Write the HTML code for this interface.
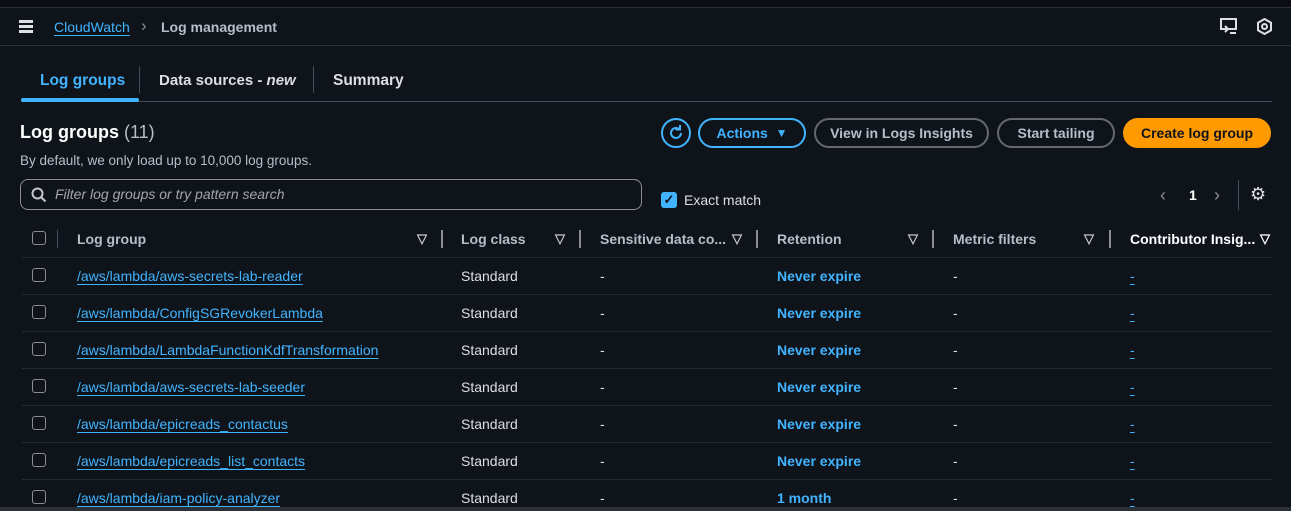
<!DOCTYPE html><html><head><style>
*{margin:0;padding:0;box-sizing:border-box}
body{width:1291px;height:511px;background:#0f141a;font-family:"Liberation Sans",sans-serif;color:#c6c6cd;position:relative;overflow:hidden;font-size:14px}
.a{position:absolute;white-space:nowrap}
.b{font-weight:bold}
.link{color:#42b4ff;text-decoration:underline;text-underline-offset:3px}
.btn{position:absolute;height:30px;border-radius:16px;border:2px solid #656871;color:#b6bec9;font-weight:bold;font-size:14px;display:flex;align-items:center;justify-content:center;top:118px}
.cb{position:absolute;width:14px;height:14px;border:1.5px solid #8c8c94;border-radius:3px;left:32px}
.sep{position:absolute;width:2px;height:18px;background:#8c8c94;top:230px}
.tri{position:absolute;top:231px;font-size:13px;font-weight:bold;color:#c6c6cd}
.hl{position:absolute;left:22px;width:1250px;height:1px;background:#232b37}
</style></head><body>
<div class="a" style="left:0;top:0;width:1291px;height:7px;background:#0a0d12"></div>
<div class="a" style="left:0;top:7px;width:1291px;height:1px;background:#2a2f38"></div>
<div class="a" style="left:0;top:45px;width:1291px;height:1px;background:#2a2f38"></div>
<div class="a" style="left:19px;top:20px;width:14px;height:2.5px;background:#dedee3;box-shadow:0 5px 0 #dedee3,0 10px 0 #dedee3"></div>
<div class="a link" style="left:54px;top:19px;font-size:14px">CloudWatch</div>
<div class="a" style="left:141px;top:16px;font-size:17px;color:#8c8c94">›</div>
<div class="a b" style="left:161px;top:19px;font-size:14px;color:#b6bec9">Log management</div>
<svg class="a" style="left:1220px;top:18px" width="18" height="17" viewBox="0 0 18 17"><rect x="1" y="1" width="15" height="10" fill="none" stroke="#dedee3" stroke-width="2"/><path d="M5 8l3 3-3 3M10 15h6" stroke="#dedee3" stroke-width="2" fill="none"/></svg>
<svg class="a" style="left:1256px;top:18px" width="17" height="17" viewBox="0 0 17 17"><path d="M8.5 1l6.5 3.7v7.6L8.5 16 2 12.3V4.7z" fill="none" stroke="#dedee3" stroke-width="2"/><circle cx="8.5" cy="8.5" r="2.5" fill="none" stroke="#dedee3" stroke-width="2"/></svg>

<div class="a b" style="left:40px;top:72px;font-size:15.5px;color:#42b4ff">Log groups</div>
<div class="a" style="left:139px;top:66px;width:1px;height:27px;background:#414d5c"></div>
<div class="a b" style="left:159px;top:72px;font-size:15px;color:#dedee3">Data sources - <i>new</i></div>
<div class="a" style="left:313px;top:66px;width:1px;height:27px;background:#414d5c"></div>
<div class="a b" style="left:333px;top:72px;font-size:15.5px;color:#dedee3">Summary</div>
<div class="a" style="left:21px;top:101px;width:1251px;height:1px;background:#414d5c"></div>
<div class="a" style="left:21px;top:98px;width:118px;height:4px;border-radius:2px;background:#42b4ff"></div>

<div class="a" style="left:20px;top:122px;font-size:18px;color:#fff"><b>Log groups</b> <span style="color:#b6bec9">(11)</span></div>
<div class="a" style="left:20px;top:153px;font-size:13.5px;color:#b6bec9">By default, we only load up to 10,000 log groups.</div>
<div class="a" style="left:20px;top:179px;width:622px;height:31px;border:1px solid #8c8c94;border-radius:8px"></div>
<svg class="a" style="left:31px;top:187px" width="16" height="16" viewBox="0 0 16 16"><circle cx="6.5" cy="6.5" r="5" fill="none" stroke="#c6c6cd" stroke-width="2"/><path d="M10 10l4.5 4.5" stroke="#c6c6cd" stroke-width="2"/></svg>
<div class="a" style="left:55px;top:186px;font-size:14px;font-style:italic;color:#a4a4ad">Filter log groups or try pattern search</div>

<div class="a" style="left:661px;top:118px;width:30px;height:30px;border:2px solid #42b4ff;border-radius:50%"></div>
<svg class="a" style="left:667px;top:124px" width="18" height="18" viewBox="0 0 18 18"><path d="M14 9a5 5 0 1 1-2-4" fill="none" stroke="#42b4ff" stroke-width="2"/><path d="M13 1v4.5H8.5" fill="none" stroke="#42b4ff" stroke-width="2"/></svg>
<div class="btn" style="left:698px;width:108px;border-color:#42b4ff;color:#42b4ff">Actions&nbsp;&nbsp;<span style="font-size:12px">▼</span></div>
<div class="btn" style="left:814px;width:175px">View in Logs Insights</div>
<div class="btn" style="left:997px;width:118px">Start tailing</div>
<div class="btn" style="left:1123px;width:148px;background:#ff9900;border-color:#ff9900;color:#0f141a">Create log group</div>

<div class="a" style="left:661px;top:192px;width:16px;height:16px;background:#42b4ff;border-radius:3px;color:#0f141a;font-size:13px;font-weight:bold;text-align:center;line-height:16px">✓</div>
<div class="a" style="left:684px;top:192px;font-size:14px;color:#dedee3">Exact match</div>
<div class="a" style="left:1160px;top:185px;font-size:18px;color:#8c8c94">‹</div>
<div class="a b" style="left:1189px;top:187px;font-size:14px;color:#fff">1</div>
<div class="a" style="left:1214px;top:185px;font-size:18px;color:#8c8c94">›</div>
<div class="a" style="left:1238px;top:180px;width:1px;height:30px;background:#414d5c"></div>
<div class="a" style="left:1250px;top:184px;font-size:18px;color:#dedee3">⚙</div>

<div class="cb" style="top:231px"></div>
<div class="a" style="left:57px;top:230px;width:1px;height:18px;background:#414d5c"></div>
<div class="a b" style="left:77px;top:231px;color:#b6bec9">Log group</div><div class="tri" style="left:417px">▽</div><div class="sep" style="left:441px"></div>
<div class="a b" style="left:461px;top:231px;color:#b6bec9">Log class</div><div class="tri" style="left:555px">▽</div><div class="sep" style="left:579px"></div>
<div class="a b" style="left:600px;top:231px;color:#b6bec9">Sensitive data co...</div><div class="tri" style="left:732px">▽</div><div class="sep" style="left:756px"></div>
<div class="a b" style="left:777px;top:231px;color:#b6bec9">Retention</div><div class="tri" style="left:908px">▽</div><div class="sep" style="left:932px"></div>
<div class="a b" style="left:953px;top:231px;color:#b6bec9">Metric filters</div><div class="tri" style="left:1084px">▽</div><div class="sep" style="left:1109px"></div>
<div class="a b" style="left:1130px;top:231px;color:#fff">Contributor Insig...</div><div class="tri" style="left:1260px;color:#fff">▽</div>
<div class="hl" style="top:257px"></div>

<div id="rows"></div>
<script>
var d=[["aws-secrets-lab-reader","Never expire"],["ConfigSGRevokerLambda","Never expire"],["LambdaFunctionKdfTransformation","Never expire"],["aws-secrets-lab-seeder","Never expire"],["epicreads_contactus","Never expire"],["epicreads_list_contacts","Never expire"],["iam-policy-analyzer","1 month"]];
var h="";d.forEach(function(r,i){var y=268+i*37;
h+='<div class="cb" style="top:'+y+'px"></div>';
h+='<div class="a link" style="left:77px;top:'+y+'px">/aws/lambda/'+r[0]+'</div>';
h+='<div class="a" style="left:461px;top:'+y+'px;color:#dedee3">Standard</div>';
h+='<div class="a" style="left:600px;top:'+y+'px;color:#dedee3">-</div>';
h+='<div class="a b" style="left:777px;top:'+y+'px;color:#42b4ff">'+r[1]+'</div>';
h+='<div class="a" style="left:953px;top:'+y+'px;color:#dedee3">-</div>';
h+='<div class="a link" style="left:1130px;top:'+y+'px">-</div>';
if(i<6)h+='<div class="hl" style="top:'+(y+26)+'px"></div>';});
document.getElementById("rows").innerHTML=h;
</script>
<div class="a" style="left:0;top:507px;width:1291px;height:4px;background:#2a2f38"></div>
</body></html>
